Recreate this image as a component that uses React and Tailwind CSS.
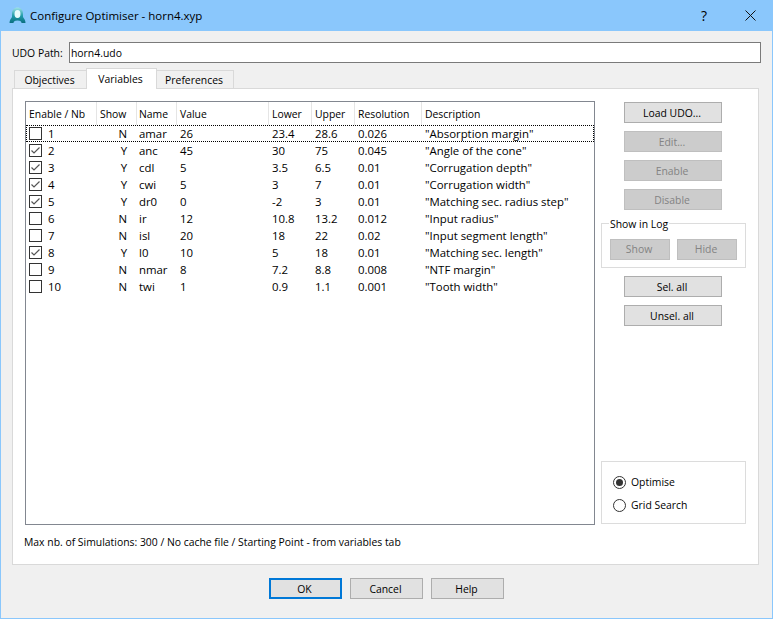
const columns = "grid grid-cols-[71px_40px_40px_92px_43px_43px_67px_1fr]";

const variables = [
  { nb: 1, on: false, show: "N", name: "amar", value: "26", lower: "23.4", upper: "28.6", res: "0.026", desc: '"Absorption margin"' },
  { nb: 2, on: true, show: "Y", name: "anc", value: "45", lower: "30", upper: "75", res: "0.045", desc: '"Angle of the cone"' },
  { nb: 3, on: true, show: "Y", name: "cdl", value: "5", lower: "3.5", upper: "6.5", res: "0.01", desc: '"Corrugation depth"' },
  { nb: 4, on: true, show: "Y", name: "cwi", value: "5", lower: "3", upper: "7", res: "0.01", desc: '"Corrugation width"' },
  { nb: 5, on: true, show: "Y", name: "dr0", value: "0", lower: "-2", upper: "3", res: "0.01", desc: '"Matching sec. radius step"' },
  { nb: 6, on: false, show: "N", name: "ir", value: "12", lower: "10.8", upper: "13.2", res: "0.012", desc: '"Input radius"' },
  { nb: 7, on: false, show: "N", name: "isl", value: "20", lower: "18", upper: "22", res: "0.02", desc: '"Input segment length"' },
  { nb: 8, on: true, show: "Y", name: "l0", value: "10", lower: "5", upper: "18", res: "0.01", desc: '"Matching sec. length"' },
  { nb: 9, on: false, show: "N", name: "nmar", value: "8", lower: "7.2", upper: "8.8", res: "0.008", desc: '"NTF margin"' },
  { nb: 10, on: false, show: "N", name: "twi", value: "1", lower: "0.9", upper: "1.1", res: "0.001", desc: '"Tooth width"' },
];

const headers = ["Enable / Nb", "Show", "Name", "Value", "Lower", "Upper", "Resolution", "Description"];

const Btn = ({ label, disabled, className = "" }) => (
  <div
    className={`h-[21px] flex items-center justify-center border pr-[2px] ${
      disabled ? "bg-[#cccccc] border-[#bfbfbf] text-[#838383]" : "bg-[#e1e1e1] border-[#adadad] text-black"
    } ${className}`}
  >
    {label}
  </div>
);

const Checkbox = ({ on }) => (
  <div className="w-[13px] h-[13px] border border-[#333333] bg-white flex items-center justify-center">
    {on && (
      <svg width="11" height="11" viewBox="0 0 11 11" fill="none">
        <path d="M1.5 5.5 L4 8 L9.5 2.5" stroke="#555555" strokeWidth="1.2" />
      </svg>
    )}
  </div>
);

const Radio = ({ on, label }) => (
  <div className="flex items-center gap-[5px] h-[14px]">
    <div className="w-[13px] h-[13px] rounded-full border border-[#333333] bg-white flex items-center justify-center">
      {on && <div className="w-[7px] h-[7px] rounded-full bg-[#333333]" />}
    </div>
    <span>{label}</span>
  </div>
);

const Row = ({ v, focused }) => (
  <div className={`${columns} h-[17px] items-center text-[11.4px] ${focused ? "outline-1 outline-dotted outline-black -outline-offset-1" : ""}`}>
    <div className="flex items-center pl-[3px]">
      <Checkbox on={v.on} />
      <span className="ml-[6px]">{v.nb}</span>
    </div>
    <div className="pr-[10px] text-right">{v.show}</div>
    <div className="pl-[2px]">{v.name}</div>
    <div className="pl-[3px]">{v.value}</div>
    <div className="pl-[3px]">{v.lower}</div>
    <div className="pl-[3px]">{v.upper}</div>
    <div className="pl-[3px]">{v.res}</div>
    <div className="pl-[3px] whitespace-nowrap">{v.desc}</div>
  </div>
);

export default function App() {
  return (
    <div className="w-[773px] h-[619px] flex flex-col border border-t-0 border-[#8ac7fc] bg-[#f0f0f0] text-[10.4px] leading-[16px] text-black font-['Open_Sans','Noto_Sans',sans-serif] overflow-hidden">
      {/* title bar */}
      <div className="h-[31px] shrink-0 -mx-px bg-[#8ac7fc] flex items-center pl-[9px]">
        <svg width="17" height="17" viewBox="0 0 17 17" fill="none">
          <defs>
            <linearGradient id="horn" x1="0" y1="0" x2="0" y2="1">
              <stop offset="0" stopColor="#9fe3e6" />
              <stop offset="0.55" stopColor="#1f9aa8" />
              <stop offset="1" stopColor="#0b6f80" />
            </linearGradient>
          </defs>
          <path d="M0.5 16 C0.5 13 2 11.5 3 10 V6.5 C3 3 5.5 0.5 8.5 0.5 C11.5 0.5 14 3 14 6.5 V10 C15 11.5 16.5 13 16.5 16 H12.5 C12.5 14.5 11.5 13.5 8.5 13.5 C5.5 13.5 4.5 14.5 4.5 16 Z" fill="url(#horn)" />
          <ellipse cx="8.5" cy="7" rx="3" ry="4" fill="#e6fbfb" />
        </svg>
        <span className="ml-[4px] text-[11.5px]">Configure Optimiser - horn4.xyp</span>
        <span className="ml-auto text-[14px] mr-[38px]">?</span>
        <svg className="mr-[17px]" width="11" height="11" viewBox="0 0 11 11" fill="none">
          <path d="M0.5 0.5 L10.5 10.5 M10.5 0.5 L0.5 10.5" stroke="#111111" strokeWidth="1" />
        </svg>
      </div>

      {/* path */}
      <div className="flex items-center pl-[11px] pr-[11px] mt-[11px] h-[21px]">
        <span className="w-[57px] whitespace-nowrap">UDO Path:</span>
        <div className="flex-1 h-[21px] bg-white border border-[#7a7a7a] flex items-center pl-[1px]">horn4.udo</div>
      </div>

      {/* tabs */}
      <div className="flex items-end pl-[13px] mt-[5px] h-[21px] relative z-10 -mb-px">
        <div className="h-[18px] mb-px w-[72px] border border-[#d9d9d9] border-r-0 border-b-0 bg-[#f0f0f0] flex items-center justify-center pt-px pr-[2px]">Objectives</div>
        <div className="h-[21px] w-[71px] border border-[#d9d9d9] border-b-0 bg-white flex items-center justify-center pr-[2px]">Variables</div>
        <div className="h-[18px] mb-px w-[77px] border border-[#d9d9d9] border-l-0 border-b-0 bg-[#f0f0f0] flex items-center justify-center pt-px pr-[2px]">Preferences</div>
      </div>

      {/* pane */}
      <div className="ml-[11px] mr-[13px] h-[477px] bg-white border border-[#d9d9d9] pt-[12px] pl-[12px] flex flex-col">
        <div className="flex h-[424px]">
          <div className="w-[570px] h-full border border-[#828790] flex flex-col overflow-hidden">
            <div className={`${columns} h-[23px] items-center`}>
              {headers.map((h, i) => (
                <div key={h} className={`h-full flex items-center pt-px whitespace-nowrap ${i === 2 ? "pl-[2px]" : "pl-[3px]"} ${i < 7 ? "border-r border-[#e5e5e5]" : ""}`}>
                  {h}
                </div>
              ))}
            </div>
            {variables.map((v, i) => (
              <Row key={v.nb} v={v} focused={i === 0} />
            ))}
          </div>

          <div className="flex-1 flex flex-col pl-[6px] pt-[1px] pb-[1px]">
            <div className="flex flex-col gap-[8px] pl-[23px]">
              <Btn label="Load UDO..." className="w-[98px]" />
              <Btn label="Edit..." disabled className="w-[98px]" />
              <Btn label="Enable" disabled className="w-[98px]" />
              <Btn label="Disable" disabled className="w-[98px]" />
            </div>
            <div className="relative mt-[13px] h-[45px] border border-[#dcdcdc] mr-[12px] flex items-center justify-between px-[8px] pt-[7px]">
              <span className="absolute -top-[8px] left-[7px] bg-white px-px">Show in Log</span>
              <Btn label="Show" disabled className="w-[60px]" />
              <Btn label="Hide" disabled className="w-[60px]" />
            </div>
            <div className="flex flex-col gap-[8px] pl-[23px] mt-[8px]">
              <Btn label="Sel. all" className="w-[98px]" />
              <Btn label="Unsel. all" className="w-[98px]" />
            </div>
            <div className="mt-auto h-[63px] border border-[#dcdcdc] mr-[12px] flex flex-col justify-center gap-[9px] pl-[11px] pt-[2px]">
              <Radio on label="Optimise" />
              <Radio label="Grid Search" />
            </div>
          </div>
        </div>
        <div className="mt-[9px] -ml-[1px] whitespace-nowrap">Max nb. of Simulations: 300 / No cache file / Starting Point - from variables tab</div>
      </div>

      {/* dialog buttons */}
      <div className="flex justify-center gap-[8px] mt-[13px]">
        <Btn label="OK" className="w-[73px] !border-2 !border-[#0078d7]" />
        <Btn label="Cancel" className="w-[73px]" />
        <Btn label="Help" className="w-[73px]" />
      </div>
    </div>
  );
}
